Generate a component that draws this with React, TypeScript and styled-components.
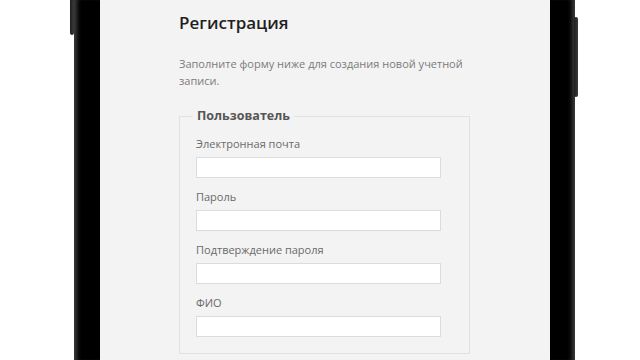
import React from 'react';
import styled, { createGlobalStyle } from 'styled-components';

const GlobalStyle = createGlobalStyle`
	html, body {
		margin: 0;
		padding: 0;
		height: 100%;
		background: #ffffff;
		overflow: hidden;
	}
	#root {
		height: 100%;
	}
`;

const Page = styled.div`
	height: 360px;
	display: flex;
	align-items: stretch;
	padding-left: 74px;
	box-sizing: border-box;
`;

const Phone = styled.div`
	position: relative;
	width: 501px;
	height: 100%;
	box-sizing: border-box;
	padding: 0 25px 0 26px;
	background: #000;
	box-shadow:
		inset 6px 0 4px -3px #3c3c3c,
		inset -6px 0 4px -3px #3c3c3c;
`;

const SideButton = styled.div<{ side: 'left' | 'right'; top: number; length: number }>`
	position: absolute;
	${(p) => (p.side === 'left' ? 'left: -4px;' : 'right: -3px;')}
	top: ${(p) => p.top}px;
	width: 4px;
	height: ${(p) => p.length}px;
	background: linear-gradient(90deg, #1e1e1e, #3a3a3a);
	border-radius: 2px;
`;

const Screen = styled.div`
	height: 100%;
	background: #f3f3f3;
	padding: 11px 0 0 79px;
	box-sizing: border-box;
	font-family: 'Open Sans', 'Noto Sans', sans-serif;
`;

const Title = styled.h1`
	margin: 0;
	font-size: 17px;
	line-height: 24px;
	font-weight: 600;
	color: #1f1f1f;
`;

const Intro = styled.p`
	margin: 20px 0 0;
	width: 292px;
	font-size: 11px;
	line-height: 17px;
	color: #7b7b7b;
`;

const Fieldset = styled.fieldset`
	margin: 19px 0 0;
	width: 291px;
	box-sizing: border-box;
	padding: 12px 28px 16px 16px;
	border: 1px solid #e1e1e1;
	display: flex;
	flex-direction: column;
	gap: 11px;
`;

const Legend = styled.legend`
	margin-left: -3px;
	padding: 0 4px;
	font-size: 12.5px;
	line-height: 16px;
	font-weight: 700;
	color: #565656;
`;

const Field = styled.label`
	display: flex;
	flex-direction: column;
	gap: 6px;
`;

const LabelText = styled.span`
	font-size: 11px;
	line-height: 15px;
	color: #6a6a6a;
`;

const Input = styled.input`
	width: 245px;
	height: 21px;
	box-sizing: border-box;
	margin: 0;
	border: 1px solid #dcdcdc;
	background: #fff;
	font-family: inherit;
	font-size: 11px;
	outline: none;
`;

const fields = [
	{ label: 'Электронная почта', type: 'email' },
	{ label: 'Пароль', type: 'password' },
	{ label: 'Подтверждение пароля', type: 'password' },
	{ label: 'ФИО', type: 'text' }
];

export default function App() {
	return (
		<>
			<GlobalStyle />
			<Page>
				<Phone>
					<SideButton side="left" top={-10} length={45} />
					<SideButton side="right" top={17} length={80} />
					<Screen>
						<Title>Регистрация</Title>
						<Intro>
							Заполните форму ниже для создания новой учетной записи.
						</Intro>
						<Fieldset>
							<Legend>Пользователь</Legend>
							{fields.map((f) => (
								<Field key={f.label}>
									<LabelText>{f.label}</LabelText>
									<Input type={f.type} />
								</Field>
							))}
						</Fieldset>
					</Screen>
				</Phone>
			</Page>
		</>
	);
}
